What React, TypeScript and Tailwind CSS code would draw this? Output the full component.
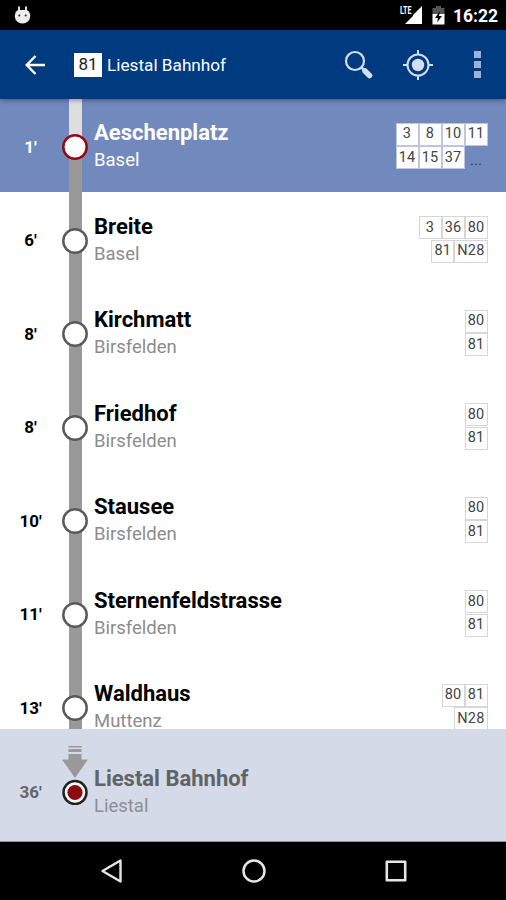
import React from "react";

interface Stop {
  time: string;
  name: string;
  city: string;
  lines: string[][];
  active?: boolean;
}

const stops: Stop[] = [
  { time: "1'", name: "Aeschenplatz", city: "Basel", lines: [["3", "8", "10", "11"], ["14", "15", "37", "..."]], active: true },
  { time: "6'", name: "Breite", city: "Basel", lines: [["3", "36", "80"], ["81", "N28"]] },
  { time: "8'", name: "Kirchmatt", city: "Birsfelden", lines: [["80"], ["81"]] },
  { time: "8'", name: "Friedhof", city: "Birsfelden", lines: [["80"], ["81"]] },
  { time: "10'", name: "Stausee", city: "Birsfelden", lines: [["80"], ["81"]] },
  { time: "11'", name: "Sternenfeldstrasse", city: "Birsfelden", lines: [["80"], ["81"]] },
  { time: "13'", name: "Waldhaus", city: "Muttenz", lines: [["80", "81"], ["N28"]] },
];

// --- STATUS BAR ---
const StatusBar = () => (
  <div className="flex h-[30px] shrink-0 items-center bg-black pl-[14px] pr-[9px] text-white">
    <svg className="h-[18px] w-[17px]" viewBox="0 0 17 18">
      <path d="M5 0.500v5M12 0.500v5" stroke="#ddd" strokeWidth="2" />
      <path d="M1.500 6.500Q2.500 4 5 4h7q2.500 0 3.500 2.500Q17 10 15.500 13.500 13 17.500 8.500 17.500T1.500 13.500Q0 10 1.500 6.500z" fill="#eee" />
      <circle cx="5.300" cy="9.500" r="1" fill="#222" />
      <circle cx="11.700" cy="9.500" r="1" fill="#222" />
    </svg>
    <div className="ml-auto flex items-center">
      <div className="relative h-[18px] w-[23px]">
        <span className="absolute -top-px left-0 origin-left scale-x-[0.72] text-[10px] font-bold leading-[12px]">LTE</span>
        <svg className="absolute inset-0" width="23" height="18" viewBox="0 0 23 18">
          <path d="M22 0v18H5L13 10V9z" fill="#fff" />
        </svg>
      </div>
      <svg className="ml-[9px]" width="13" height="19" viewBox="0 0 13 19">
        <path d="M4 0h5v2h3.500v7H.5V2H4z" fill="#555" />
        <path d="M.5 8h12v10.500H.5z" fill="#fff" />
        <path d="M8 5 3 12h3l-1 4.500 5-6.500H7z" fill="#000" />
      </svg>
      <span className="ml-[8px] w-[44px] whitespace-nowrap pt-[2px] text-[17.500px] font-bold leading-[28px]">16:22</span>
    </div>
  </div>
);

// --- APP BAR ---
const AppBar = () => (
  <div className="relative z-10 flex h-[69px] shrink-0 items-center bg-[#003a7f] pl-[25px] pr-[20px] text-white shadow-[0_1px_5px_rgba(0,0,0,0.4)]">
    <svg width="21" height="20" viewBox="0 0 21 20" fill="none" stroke="#fff" strokeWidth="2.400">
      <path d="M20 10H2M10.500 1 1.700 10l8.800 9" />
    </svg>
    <span className="ml-[28px] flex h-[24px] w-[28px] items-center justify-center bg-white pt-px text-[17px] text-[#222]">81</span>
    <span className="ml-[5px] whitespace-nowrap pt-[2px] text-[17.200px]">Liestal Bahnhof</span>
    <svg className="ml-auto" width="29" height="29" viewBox="0 0 29 29" fill="none" stroke="#d3def2">
      <circle cx="11" cy="11" r="9" strokeWidth="2.200" />
      <path d="m17.500 17.500 3 3" strokeWidth="2.500" />
      <path d="m21 21 4.500 4.500" strokeWidth="5.500" strokeLinecap="round" />
    </svg>
    <svg className="ml-[30px]" width="30" height="30" viewBox="0 0 30 30" fill="none" stroke="#d3def2" strokeWidth="2">
      <circle cx="15" cy="15" r="10.500" />
      <circle cx="15" cy="15" r="6.200" fill="#d3def2" stroke="none" />
      <path d="M15 0v5M15 25v5M0 15h5M25 15h5" />
    </svg>
    <div className="ml-[41px] mr-[5px] flex flex-col gap-[3px]">
      <span className="h-[7px] w-[7px] bg-[#9db2d6]" />
      <span className="h-[7px] w-[7px] bg-[#9db2d6]" />
      <span className="h-[7px] w-[7px] bg-[#9db2d6]" />
    </div>
  </div>
);

const LineBadge = ({ label, active }: { label: string; active?: boolean }) => {
  if (label === "...") {
    return <span className="w-[23px] text-center text-[15px] leading-[29px] text-[#26355c]">...</span>;
  }
  return (
    <span
      className={`flex h-[23px] min-w-[23px] items-center justify-center border bg-white px-[2px] pt-px text-[14.500px] leading-none tracking-[0.2px] text-[#444] ${
        active ? "border-[#bcc6de]" : "border-[#d6d6d6]"
      }`}
    >
      {label}
    </span>
  );
};

const StopRow = ({ stop, index }: { stop: Stop; index: number }) => (
  <div className={`flex h-[93.500px] shrink-0 ${stop.active ? "bg-[#7189bc] text-white" : "bg-white text-black"}`}>
    <div className="w-[61px] pt-[35px] text-center text-[17px] font-bold leading-[26px]">{stop.time}</div>
    <div className="ml-px flex w-[26px] flex-col items-center">
      <div className={`h-[37.500px] w-[13px] ${index === 0 ? "bg-[#dedede]" : "bg-[#999]"}`} />
      <svg className="relative -my-[2px] shrink-0" width="26" height="26" viewBox="0 0 26 26">
        <circle cx="13" cy="13" r="11.700" fill="#fff" stroke={stop.active ? "#94090f" : "#5a5a5a"} strokeWidth="2.500" />
      </svg>
      <div className="w-[13px] flex-1 bg-[#999]" />
    </div>
    <div className="pl-[6px] pt-[20.600px]">
      <div className="whitespace-nowrap text-[22px] font-bold leading-[28px]">{stop.name}</div>
      <div className={`text-[18.500px] leading-[26px] ${stop.active ? "text-white" : "text-[#8c8c8c]"}`}>{stop.city}</div>
    </div>
    <div className="ml-auto flex flex-col items-end gap-[0.500px] pr-[18.500px] pt-[24px]">
      {stop.lines.map((row, i) => (
        <div key={i} className="flex h-[23px]">
          {row.map((label) => (
            <LineBadge key={label} label={label} active={stop.active} />
          ))}
        </div>
      ))}
    </div>
  </div>
);

// --- FINAL STOP, PINNED BELOW THE LIST ---
const Destination = () => (
  <div className="flex h-[113px] shrink-0 border-b border-[#8f929c] bg-[#d4dae7]">
    <div className="w-[61px] pt-[50px] text-center text-[17px] font-bold leading-[26px] text-[#666]">36'</div>
    <div className="ml-px flex w-[26px] flex-col items-center pt-[17px]">
      <svg width="26" height="33" viewBox="0 0 26 33" fill="#999">
        <path d="M6.500 0h13v1.500h-13zM6.500 3h13v3h-13zM6.500 8h13v5.500H26L13 32 0 13.500h6.500z" />
      </svg>
      <svg className="shrink-0" width="26" height="26" viewBox="0 0 26 26">
        <circle cx="13" cy="13.500" r="11.500" fill="#fff" stroke="#222" strokeWidth="2.500" />
        <circle cx="13" cy="13.500" r="7.600" fill="#8c0a10" />
      </svg>
    </div>
    <div className="pl-[6px] pt-[36px]">
      <div className="whitespace-nowrap text-[22px] font-bold leading-[28px] text-[#606368]">Liestal Bahnhof</div>
      <div className="text-[18.500px] leading-[26px] text-[#8b8e96]">Liestal</div>
    </div>
  </div>
);

// --- SYSTEM NAVIGATION ---
const NavBar = () => (
  <div className="flex flex-1 items-center bg-black pl-[100px] pr-[99px]">
    <svg width="24" height="24" viewBox="0 0 24 24" fill="none" stroke="#e6e6e6" strokeWidth="2.400" strokeLinejoin="round">
      <path d="M20.500 1.500v21L2.500 12z" />
    </svg>
    <svg className="ml-[118px]" width="24" height="24" viewBox="0 0 24 24" fill="none" stroke="#e6e6e6" strokeWidth="2.500">
      <circle cx="12" cy="12" r="10.500" />
    </svg>
    <svg className="ml-auto" width="22" height="22" viewBox="0 0 22 22" fill="none" stroke="#e6e6e6" strokeWidth="2.600" strokeLinejoin="round">
      <path d="M1.800 1.800h18.400v18.400H1.800z" />
    </svg>
  </div>
);

export default function App() {
  return (
    <div className="flex h-[900px] w-[506px] flex-col overflow-hidden bg-white font-['Roboto',sans-serif]">
      <StatusBar />
      <AppBar />
      <div className="h-[630px] shrink-0 overflow-hidden">
        <div className="-mt-[0.500px] flex flex-col">
          {stops.map((stop, i) => (
            <StopRow key={i} stop={stop} index={i} />
          ))}
        </div>
      </div>
      <Destination />
      <NavBar />
    </div>
  );
}
